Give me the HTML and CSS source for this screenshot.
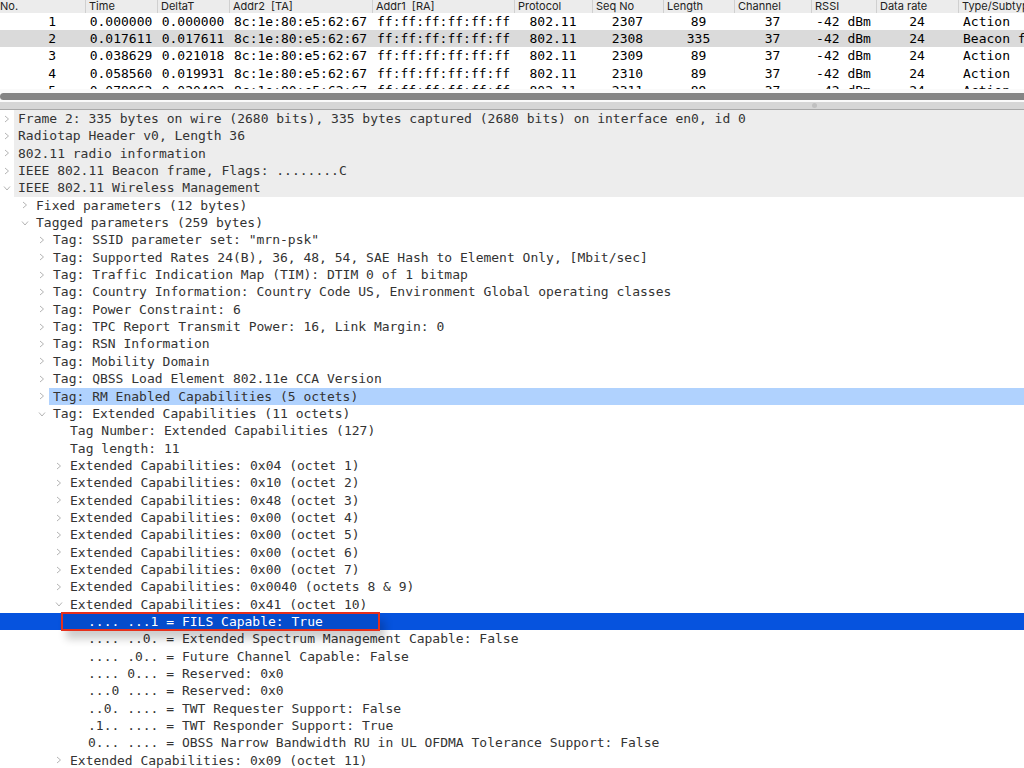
FILE: index.html
```html
<!DOCTYPE html>
<html lang="en">
<head>
  <meta charset="UTF-8">
  <meta name="viewport" content="width=device-width, initial-scale=1.0">
  <title>Packet capture</title>
  <link rel="stylesheet" href="styles.css">
</head>
<body>
  <svg class="icons" width="0" height="0">
    <symbol id="right" viewBox="0 0 8 8"><path d="M2 1 L5.5 4 L2 7"/></symbol>
    <symbol id="down" viewBox="0 0 8 8"><path d="M1 2.5 L4 6 L7 2.5"/></symbol>
  </svg>

  <div class="packet-list">
    <table>
      <colgroup>
        <col class="w-no"><col class="w-time"><col class="w-time"><col class="w-ta"><col class="w-ra">
        <col class="w-proto"><col class="w-num"><col class="w-num"><col class="w-chan"><col class="w-rate"><col class="w-data"><col>
      </colgroup>
      <thead>
        <tr><th>No.</th><th>Time</th><th>DeltaT</th><th>Addr2&nbsp; [TA]</th><th>Addr1&nbsp; [RA]</th><th>Protocol</th><th>Seq No</th><th>Length</th><th>Channel</th><th>RSSI</th><th>Data rate</th><th>Type/Subtype</th></tr>
      </thead>
      <tbody>
        <tr><td class="no">1</td><td>0.000000</td><td>0.000000</td><td class="left">8c:1e:80:e5:62:67</td><td class="left">ff:ff:ff:ff:ff:ff</td><td>802.11</td><td>2307</td><td>89</td><td>37</td><td>-42 dBm</td><td>24</td><td class="left">Action</td></tr>
        <tr class="current"><td class="no">2</td><td>0.017611</td><td>0.017611</td><td class="left">8c:1e:80:e5:62:67</td><td class="left">ff:ff:ff:ff:ff:ff</td><td>802.11</td><td>2308</td><td>335</td><td>37</td><td>-42 dBm</td><td>24</td><td class="left">Beacon frame</td></tr>
        <tr><td class="no">3</td><td>0.038629</td><td>0.021018</td><td class="left">8c:1e:80:e5:62:67</td><td class="left">ff:ff:ff:ff:ff:ff</td><td>802.11</td><td>2309</td><td>89</td><td>37</td><td>-42 dBm</td><td>24</td><td class="left">Action</td></tr>
        <tr><td class="no">4</td><td>0.058560</td><td>0.019931</td><td class="left">8c:1e:80:e5:62:67</td><td class="left">ff:ff:ff:ff:ff:ff</td><td>802.11</td><td>2310</td><td>89</td><td>37</td><td>-42 dBm</td><td>24</td><td class="left">Action</td></tr>
        <tr><td class="no">5</td><td>0.078962</td><td>0.020402</td><td class="left">8c:1e:80:e5:62:67</td><td class="left">ff:ff:ff:ff:ff:ff</td><td>802.11</td><td>2311</td><td>89</td><td>37</td><td>-42 dBm</td><td>24</td><td class="left">Action</td></tr>
      </tbody>
    </table>
  </div>
  <div class="scroll-track"><div class="scroll-thumb"></div></div>
  <div class="splitter"><span class="grip"></span></div>

  <ul class="tree">
    <li class="row proto"><button aria-label="Expand"><svg><use href="#right"/></svg></button><span>Frame 2: 335 bytes on wire (2680 bits), 335 bytes captured (2680 bits) on interface en0, id 0</span></li>
    <li class="row proto"><button aria-label="Expand"><svg><use href="#right"/></svg></button><span>Radiotap Header v0, Length 36</span></li>
    <li class="row proto"><button aria-label="Expand"><svg><use href="#right"/></svg></button><span>802.11 radio information</span></li>
    <li class="row proto"><button aria-label="Expand"><svg><use href="#right"/></svg></button><span>IEEE 802.11 Beacon frame, Flags: ........C</span></li>
    <li class="row proto"><button aria-label="Collapse"><svg><use href="#down"/></svg></button><span>IEEE 802.11 Wireless Management</span></li>
    <li class="row l1"><button aria-label="Expand"><svg><use href="#right"/></svg></button><span>Fixed parameters (12 bytes)</span></li>
    <li class="row l1"><button aria-label="Collapse"><svg><use href="#down"/></svg></button><span>Tagged parameters (259 bytes)</span></li>
    <li class="row l2"><button aria-label="Expand"><svg><use href="#right"/></svg></button><span>Tag: SSID parameter set: "mrn-psk"</span></li>
    <li class="row l2"><button aria-label="Expand"><svg><use href="#right"/></svg></button><span>Tag: Supported Rates 24(B), 36, 48, 54, SAE Hash to Element Only, [Mbit/sec]</span></li>
    <li class="row l2"><button aria-label="Expand"><svg><use href="#right"/></svg></button><span>Tag: Traffic Indication Map (TIM): DTIM 0 of 1 bitmap</span></li>
    <li class="row l2"><button aria-label="Expand"><svg><use href="#right"/></svg></button><span>Tag: Country Information: Country Code US, Environment Global operating classes</span></li>
    <li class="row l2"><button aria-label="Expand"><svg><use href="#right"/></svg></button><span>Tag: Power Constraint: 6</span></li>
    <li class="row l2"><button aria-label="Expand"><svg><use href="#right"/></svg></button><span>Tag: TPC Report Transmit Power: 16, Link Margin: 0</span></li>
    <li class="row l2"><button aria-label="Expand"><svg><use href="#right"/></svg></button><span>Tag: RSN Information</span></li>
    <li class="row l2"><button aria-label="Expand"><svg><use href="#right"/></svg></button><span>Tag: Mobility Domain</span></li>
    <li class="row l2"><button aria-label="Expand"><svg><use href="#right"/></svg></button><span>Tag: QBSS Load Element 802.11e CCA Version</span></li>
    <li class="row l2 related"><button aria-label="Expand"><svg><use href="#right"/></svg></button><span>Tag: RM Enabled Capabilities (5 octets)</span></li>
    <li class="row l2"><button aria-label="Collapse"><svg><use href="#down"/></svg></button><span>Tag: Extended Capabilities (11 octets)</span></li>
    <li class="row l3 leaf"><span>Tag Number: Extended Capabilities (127)</span></li>
    <li class="row l3 leaf"><span>Tag length: 11</span></li>
    <li class="row l3"><button aria-label="Expand"><svg><use href="#right"/></svg></button><span>Extended Capabilities: 0x04 (octet 1)</span></li>
    <li class="row l3"><button aria-label="Expand"><svg><use href="#right"/></svg></button><span>Extended Capabilities: 0x10 (octet 2)</span></li>
    <li class="row l3"><button aria-label="Expand"><svg><use href="#right"/></svg></button><span>Extended Capabilities: 0x48 (octet 3)</span></li>
    <li class="row l3"><button aria-label="Expand"><svg><use href="#right"/></svg></button><span>Extended Capabilities: 0x00 (octet 4)</span></li>
    <li class="row l3"><button aria-label="Expand"><svg><use href="#right"/></svg></button><span>Extended Capabilities: 0x00 (octet 5)</span></li>
    <li class="row l3"><button aria-label="Expand"><svg><use href="#right"/></svg></button><span>Extended Capabilities: 0x00 (octet 6)</span></li>
    <li class="row l3"><button aria-label="Expand"><svg><use href="#right"/></svg></button><span>Extended Capabilities: 0x00 (octet 7)</span></li>
    <li class="row l3"><button aria-label="Expand"><svg><use href="#right"/></svg></button><span>Extended Capabilities: 0x0040 (octets 8 &amp; 9)</span></li>
    <li class="row l3"><button aria-label="Collapse"><svg><use href="#down"/></svg></button><span>Extended Capabilities: 0x41 (octet 10)</span></li>
    <li class="row l4 leaf selected"><div class="callout"></div><span>.... ...1 = FILS Capable: True</span></li>
    <li class="row l4 leaf"><span>.... ..0. = Extended Spectrum Management Capable: False</span></li>
    <li class="row l4 leaf"><span>.... .0.. = Future Channel Capable: False</span></li>
    <li class="row l4 leaf"><span>.... 0... = Reserved: 0x0</span></li>
    <li class="row l4 leaf"><span>...0 .... = Reserved: 0x0</span></li>
    <li class="row l4 leaf"><span>..0. .... = TWT Requester Support: False</span></li>
    <li class="row l4 leaf"><span>.1.. .... = TWT Responder Support: True</span></li>
    <li class="row l4 leaf"><span>0... .... = OBSS Narrow Bandwidth RU in UL OFDMA Tolerance Support: False</span></li>
    <li class="row l3"><button aria-label="Expand"><svg><use href="#right"/></svg></button><span>Extended Capabilities: 0x09 (octet 11)</span></li>
  </ul>
</body>
</html>
```
FILE: styles.css
```css
* {
  box-sizing: border-box;
}

body {
  margin: 0;
  height: 100vh;
  display: flex;
  flex-direction: column;
  overflow: hidden;
  background: #fff;
  color: #333;
  font-family: "DejaVu Sans Mono", monospace;
  font-size: 13px;
  line-height: 17px;
}

.icons {
  position: absolute;
}

/* packet list */
.packet-list {
  flex: none;
  height: 89px;
  overflow: hidden;
}

table {
  width: 100%;
  height: 99px;
  table-layout: fixed;
  border-collapse: collapse;
  color: #000;
}

.w-no { width: 85px; }
.w-time { width: 72px; }
.w-ta { width: 143px; }
.w-ra { width: 142px; }
.w-proto { width: 78px; }
.w-num { width: 71px; }
.w-chan { width: 77px; }
.w-rate { width: 65px; }
.w-data { width: 82px; }

th {
  height: 13px;
  padding: 0 0 1px 4px;
  background: #ececec;
  color: #222;
  font-family: Inter, sans-serif;
  font-size: 11px;
  font-weight: 400;
  line-height: 12px;
  text-align: left;
  white-space: nowrap;
  box-shadow: inset 1px 0 #d0d0d0;
}

th:first-child {
  padding-left: 0;
  box-shadow: none;
}

td {
  padding: 0;
  text-align: center;
  vertical-align: top;
  white-space: nowrap;
}

td.no {
  padding-right: 29px;
  text-align: right;
}

td.left {
  padding-left: 5px;
  text-align: left;
}

.current {
  background: #dadada;
}

.scroll-track {
  flex: none;
  height: 13px;
  padding: 4px 0 2px;
  background: #fafafa;
}

.scroll-thumb {
  height: 7px;
  border-radius: 4px 0 0 4px;
  background: #858585;
}

.splitter {
  flex: none;
  display: flex;
  align-items: center;
  justify-content: center;
  height: 8px;
  padding-left: 59%;
  background: #d6d6d6;
  border-bottom: 1px solid #a8a8a8;
}

.grip {
  width: 5px;
  height: 5px;
  border-radius: 50%;
  background: #c0c0c0;
}

/* packet details */
.tree {
  flex: 1;
  display: flex;
  flex-direction: column;
  margin: 0 0 -1px;
  padding: 0;
  list-style: none;
}

.row {
  position: relative;
  flex: 1 1 0;
  min-height: 17px;
  display: flex;
  align-items: stretch;
  white-space: pre;
}

.row span {
  flex: 1;
  padding-left: 4px;
}

.row button {
  display: flex;
  align-items: center;
  justify-content: center;
  width: 14px;
  padding: 0;
  border: none;
  background: none;
}

.row svg {
  width: 8px;
  height: 8px;
  fill: none;
  stroke: #b4b4b4;
}

.l1 { padding-left: 18px; }
.l2 { padding-left: 35px; }
.l3 { padding-left: 52px; }
.l4 { padding-left: 70px; }

.leaf span {
  padding-left: 18px;
}

.proto span {
  background: #ededed;
}

.related span {
  background: #b0d2fe;
}

.selected {
  background: #0653de;
  color: #fff;
}

.selected span {
  z-index: 2;
}

/* red frame round the selected field */
.callout {
  position: absolute;
  z-index: 1;
  top: -1px;
  bottom: -1px;
  left: 61px;
  width: 319px;
  border: 2px solid #e6301c;
  background: rgba(0, 0, 0, 0.08);
  box-shadow: 5px 8px 8px rgba(0, 0, 0, 0.2);
}
```
